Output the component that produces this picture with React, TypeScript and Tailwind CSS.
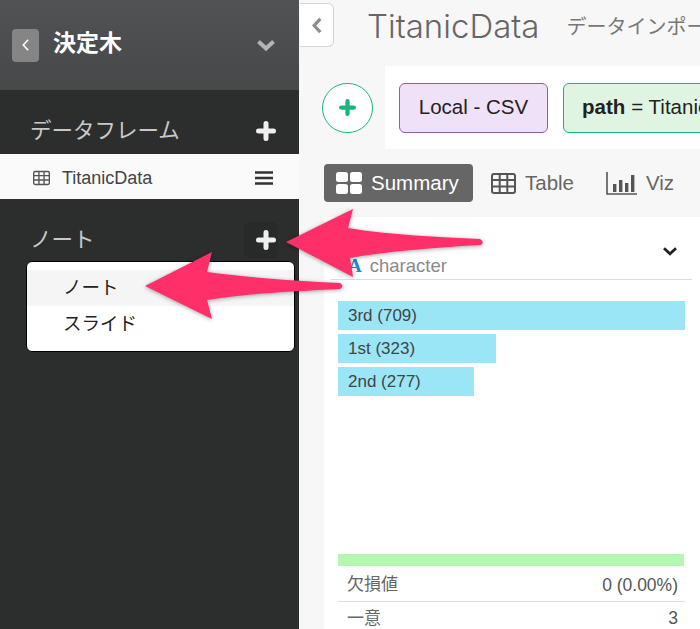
const sans = "font-['Liberation_Sans','Noto_Sans_CJK_JP',sans-serif]";

function Plus({ className }: { className?: string }) {
  return (
    <svg viewBox="0 0 20 20" className={className} aria-hidden={true}>
      <path d="M10 2.5v15M2.5 10h15" stroke="currentColor" strokeWidth="5" strokeLinecap="round" fill="none" />
    </svg>
  );
}

function Chevron({ className, width = 4 }: { className?: string; width?: number }) {
  return (
    <svg viewBox="0 0 20 12" className={className} aria-hidden={true}>
      <path d="M2.5 2.5 10 9.5l7.5-7" stroke="currentColor" strokeWidth={width} fill="none" />
    </svg>
  );
}

function TableIcon({ className }: { className?: string }) {
  return (
    <svg viewBox="0 0 25 21" className={className} aria-hidden={true}>
      <rect x="1" y="1" width="23" height="19" rx="2" fill="none" stroke="currentColor" strokeWidth="2" />
      <path d="M1 7h23M1 13.5h23M8.7 1v19M16.3 1v19" stroke="currentColor" strokeWidth="2" fill="none" />
    </svg>
  );
}

function Arrows() {
  return (
    <svg viewBox="0 0 700 629" className="absolute inset-0 h-[629px] w-[700px] drop-shadow-[0_1px_2px_rgba(0,0,0,0.35)]" aria-hidden={true}>
      <path
        d="M286 242 353 209 348 228C390 235 440 237 480 239Q485 242 481 245C440 247 390 251 350 258L353 277Z"
        fill="#fe2f69"
      />
      <path
        d="M145 286 212 252 207 272C250 278 300 281 340 283Q345 286 340 289C300 291 250 293 207 300L212 319Z"
        fill="#fe2f69"
      />
    </svg>
  );
}

function SummaryBar({ label, width }: { label: string; width: string }) {
  return (
    <div className={`flex h-[29px] items-center bg-[#9ae5f6] pl-[10px] text-[17px] text-[#444] ${width}`}>
      {label}
    </div>
  );
}

export default function App() {
  return (
    <div className={`relative flex h-[629px] w-[700px] overflow-hidden bg-[#f7f7f7] ${sans}`}>
      {/* sidebar */}
      <aside className="flex h-full w-[299px] shrink-0 flex-col bg-[#2c2e2e]">
        <div className="flex h-[90px] shrink-0 items-center bg-gradient-to-b from-[#515254] to-[#47484a] pl-3 pr-[23px]">
          <div className="flex h-[33px] w-[27px] items-center justify-center rounded bg-[#858585] text-white">
            <svg viewBox="0 0 10 16" className="h-[14px] w-[9px]" aria-hidden={true}>
              <path d="M8 2 2.5 8 8 14" stroke="currentColor" strokeWidth="1.8" fill="none" />
            </svg>
          </div>
          <span className="mb-1 ml-[14px] text-[23px] font-bold text-white">決定木</span>
          <Chevron className="ml-auto h-[12px] w-[20px] text-[#b4b4b4]" />
        </div>

        <div className="flex h-[64px] shrink-0 items-end pl-[30px] pr-[23px]">
          <span className="mb-[6px] text-[21.5px] leading-[34px] text-[#c8c8c8]">データフレーム</span>
          <Plus className="mb-[13px] ml-auto h-[20px] w-[20px] text-[#efefef]" />
        </div>
        <div className="flex h-[45px] shrink-0 items-center bg-[#fafafa] pl-[33px] pr-[26px] pt-[3px] text-[#444]">
          <TableIcon className="h-[16px] w-[17px] text-[#555]" />
          <span className="ml-3 text-[18px]">TitanicData</span>
          <svg viewBox="0 0 18 14" className="ml-auto h-[14px] w-[18px] text-[#333]" aria-hidden={true}>
            <path d="M0 1.5h18M0 7h18M0 12.5h18" stroke="currentColor" strokeWidth="2.4" fill="none" />
          </svg>
        </div>

        <div className="flex h-[59px] shrink-0 items-end pl-[30px] pr-[21px]">
          <span className="text-[21.5px] leading-[36px] text-[#c8c8c8]">ノート</span>
          <div className="ml-auto flex h-[36px] w-[34px] items-center justify-end rounded-md bg-[#282a2a] pr-[2px]">
            <Plus className="h-[20px] w-[20px] text-[#efefef]" />
          </div>
        </div>
        <div className="ml-[26px] mt-[3px] h-[91px] w-[269px] rounded-md border border-black bg-white py-2 text-[18.5px] text-[#222]">
          <div className="flex h-[36px] items-center bg-[#f5f5f5] pl-9">ノート</div>
          <div className="flex h-[36px] items-center pl-9">スライド</div>
        </div>
      </aside>

      {/* main */}
      <main className="flex h-full min-w-0 flex-1 flex-col overflow-hidden pl-px">
        <div className="flex h-[66px] shrink-0 items-start">
          <button className="mt-[3px] flex h-[44px] w-[34px] shrink-0 items-center justify-center rounded-r-md border border-l-0 border-[#d4d4d4] bg-white text-[#8c8c8c]">
            <svg viewBox="0 0 12 18" className="h-[17px] w-[12px]" aria-hidden={true}>
              <path d="M9.5 2 3 9l6.5 7" stroke="currentColor" strokeWidth="3.4" fill="none" />
            </svg>
          </button>
          <h1 className="ml-[33px] mt-[4px] shrink-0 whitespace-nowrap font-['Inter',sans-serif] text-[33px] font-light leading-[44px] text-[#666]">
            TitanicData
          </h1>
          <span className="ml-[27px] mt-[8px] shrink-0 whitespace-nowrap text-[20px] leading-[38px] text-[#777]">
            データインポート
          </span>
        </div>

        <div className="relative flex h-[83px] shrink-0 items-center pl-[22px]">
          <div className="absolute inset-y-0 left-[85px] right-0 bg-white" />
          <div className="relative flex h-[50px] w-[51px] shrink-0 items-center justify-center rounded-full border border-[#17b67f] bg-white text-[#17b67f]">
            <Plus className="h-[17px] w-[17px]" />
          </div>
          <div className="relative ml-[26px] flex h-[50px] w-[149px] shrink-0 items-center justify-center rounded-md border border-[#8f5ca8] bg-[#efe1f8] text-[20.5px] text-[#222]">
            Local - CSV
          </div>
          <div className="relative ml-[15px] flex h-[50px] w-[200px] shrink-0 items-center whitespace-nowrap rounded-md border border-[#17b67f] bg-[#e0f5e1] pl-[18px] text-[20.5px] text-[#222]">
            <span className="font-bold">path</span>
            <span className="ml-[6px]">= Titanic.csv</span>
          </div>
        </div>

        <div className="mt-[15px] flex h-[38px] shrink-0 items-center pl-6 text-[20.5px] text-[#666]">
          <div className="flex h-[38px] w-[149px] items-center rounded-sm bg-[#666] pl-[12px] text-white">
            <svg viewBox="0 0 26 22" className="h-[22px] w-[26px]" aria-hidden={true}>
              <rect x="0" y="0" width="12" height="10" rx="2.5" fill="currentColor" />
              <rect x="14" y="0" width="12" height="10" rx="2.5" fill="currentColor" />
              <rect x="0" y="12" width="12" height="10" rx="2.5" fill="currentColor" />
              <rect x="14" y="12" width="12" height="10" rx="2.5" fill="currentColor" />
            </svg>
            <span className="ml-[9px]">Summary</span>
          </div>
          <TableIcon className="ml-[18px] h-[21px] w-[25px] text-[#555]" />
          <span className="ml-[9px]">Table</span>
          <svg viewBox="0 0 31 23" className="ml-8 h-[23px] w-[31px] text-[#555]" aria-hidden={true}>
            <path d="M1 0v22h30" stroke="currentColor" strokeWidth="1.6" fill="none" />
            <path d="M7 12h3.4v8H7zM13 8h3.4v12H13zM19 11h3.4v9H19zM25 3h3.4v17H25z" fill="currentColor" />
          </svg>
          <span className="ml-[9px]">Viz</span>
        </div>

        <section className="ml-6 mt-[15px] flex min-h-0 flex-1 flex-col bg-white pl-[7px] pr-2">
          <div className="flex h-[63px] shrink-0 items-end border-b border-[#ddd] pl-[17px] pr-[14px]">
            <span className="font-['Liberation_Serif',serif] text-[19px] font-bold leading-[26px] text-[#1688d2]">A</span>
            <span className="ml-2 text-[18.5px] leading-[26px] text-[#8a8a8a]">character</span>
            <Chevron className="mb-[23px] ml-auto h-[10px] w-[16px] text-[#222]" width={3.4} />
          </div>
          <div className="mt-[21px] flex shrink-0 flex-col gap-1 pl-[7px] pr-[7px]">
            <SummaryBar label="3rd (709)" width="w-full" />
            <SummaryBar label="1st (323)" width="w-[158px]" />
            <SummaryBar label="2nd (277)" width="w-[136px]" />
          </div>
          <div className="ml-[7px] mr-2 mt-[158px] h-3 shrink-0 bg-[#b3f7b0]" />
          <div className="mx-[7px] mt-[3px] flex h-[33px] shrink-0 items-center justify-between border-b border-[#ddd] pl-[9px] pr-[7px] text-[17px] text-[#666]">
            <span>欠損値</span>
            <span className="text-[17.5px] text-[#555]">0 (0.00%)</span>
          </div>
          <div className="mx-[7px] flex h-[33px] shrink-0 items-center justify-between pl-[9px] pr-[7px] text-[17px] text-[#666]">
            <span>一意</span>
            <span className="text-[17.5px] text-[#555]">3</span>
          </div>
        </section>
      </main>

      <Arrows />
    </div>
  );
}
